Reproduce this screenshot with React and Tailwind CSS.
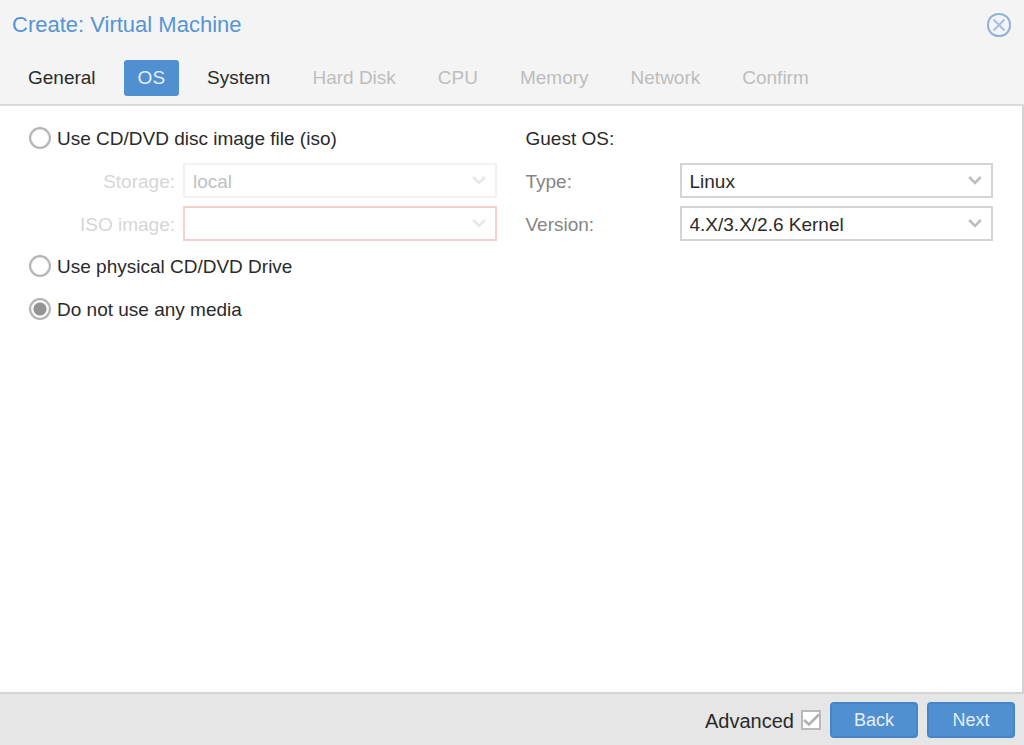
// Create VM wizard, "OS" step: title bar + step tabs, media / guest OS form,
// footer with the Advanced toggle and Back / Next.
import { useState } from 'react'

const steps = [
  ['General', 'done'],
  ['OS', 'active'],
  ['System', 'done'],
  ['Hard Disk', 'locked'],
  ['CPU', 'locked'],
  ['Memory', 'locked'],
  ['Network', 'locked'],
  ['Confirm', 'locked'],
]

const stepStyle = {
  done: 'text-[#2a2a2a]',
  active: 'bg-[#5190d0] text-[#e4eef8]',
  locked: 'text-[#bdbdbd]',
}

function CloseIcon() {
  return (
    <svg viewBox="0 0 24 24" className="size-6" fill="none" aria-hidden>
      <rect x="1" y="1" width="22" height="22" rx="10.5" stroke="#8fb3da" strokeWidth="2" />
      <path d="M6.5 6.5l11 11M17.5 6.5l-11 11" stroke="#a4c1e8" strokeWidth="2" />
    </svg>
  )
}

function Combo({ id, label, options, align = 'left', disabled, invalid }) {
  return (
    <div className="flex h-[35px] items-center">
      <label
        htmlFor={id}
        className={`w-[154px] shrink-0 pt-[2px] pr-2 ${align === 'right' ? 'text-right' : ''} ${disabled ? 'text-[#d6d6d6]' : 'text-[#858585]'}`}
      >
        {label}
      </label>
      <div className="relative h-full min-w-0 flex-1">
        <select
          id={id}
          disabled={disabled}
          className={`h-full w-full appearance-none border-2 bg-white pt-[2px] pr-9 pl-2 opacity-100 outline-none ${invalid ? 'border-[#f3d0cb]' : disabled ? 'border-[#f2f2f2]' : 'border-[#d4d4d4]'} ${disabled ? 'text-[#c0c0c0]' : 'text-[#2a2a2a]'}`}
        >
          {options.map((o) => <option key={o}>{o}</option>)}
        </select>
        <svg
          viewBox="0 0 14 10"
          className={`pointer-events-none absolute top-3 right-[11px] h-[10px] w-[14px] ${disabled ? 'text-[#e8e8e8]' : 'text-[#bebebe]'}`}
          fill="none"
          aria-hidden
        >
          <path d="M1.2 2L7 7.8 12.8 2" stroke="currentColor" strokeWidth="2.6" />
        </svg>
      </div>
    </div>
  )
}

function MediaRadio({ label, value, media, onChange }) {
  return (
    <label className="flex h-9 items-center gap-[6px]">
      <input
        type="radio"
        name="media"
        value={value}
        checked={media === value}
        onChange={() => onChange(value)}
        className="size-[22px] shrink-0 appearance-none rounded-full border-2 border-[#b4b4b4] bg-white shadow-[inset_0_0_2px_#c8c8c8] checked:bg-[radial-gradient(circle,#949494_6px,#fff_7px)]"
      />
      <span className="pt-[2px]">{label}</span>
    </label>
  )
}

export default function App() {
  const [media, setMedia] = useState('none')
  const [advanced, setAdvanced] = useState(true)

  return (
    <div className="flex min-h-screen flex-col bg-white font-['Liberation_Sans',Arial,sans-serif] text-[19px] leading-6 text-[#2a2a2a]">
      <header className="border-b-2 border-[#dadada] bg-[#f4f4f4] pb-2">
        <div className="flex h-[50px] items-center justify-between pr-[13px] pl-3">
          <h1 className="text-[22px] text-[#5594d5]">Create: Virtual Machine</h1>
          <button aria-label="Close"><CloseIcon /></button>
        </div>
        <nav className="mt-[10px] flex gap-[14px] pl-[14px]">
          {steps.map(([name, state]) => (
            <button
              key={name}
              disabled={state === 'locked'}
              className={`h-9 rounded-[3px] px-[14px] whitespace-nowrap ${stepStyle[state]}`}
            >
              {name}
            </button>
          ))}
        </nav>
      </header>

      <main className="grid flex-1 grid-cols-2 content-start gap-[29px] border-r-2 border-[#d2d2d2] px-[29px] pt-[14px]">
        <div className="flex flex-col gap-[7px]">
          <MediaRadio label="Use CD/DVD disc image file (iso)" value="iso" media={media} onChange={setMedia} />
          <div className="flex flex-col gap-2">
            <Combo id="storage" label="Storage:" options={['local']} align="right" disabled={media !== 'iso'} />
            <Combo id="iso" label="ISO image:" options={['']} align="right" disabled={media !== 'iso'} invalid />
          </div>
          <MediaRadio label="Use physical CD/DVD Drive" value="cdrom" media={media} onChange={setMedia} />
          <MediaRadio label="Do not use any media" value="none" media={media} onChange={setMedia} />
        </div>

        <div className="flex flex-col gap-[7px]">
          <h2 className="flex h-9 items-center pt-[2px]">Guest OS:</h2>
          <div className="flex flex-col gap-2">
            <Combo id="ostype" label="Type:" options={['Linux']} />
            <Combo id="osversion" label="Version:" options={['4.X/3.X/2.6 Kernel']} />
          </div>
        </div>
      </main>

      <footer className="flex items-center justify-end gap-[9px] border-t-2 border-[#d2d2d2] bg-[#e6e6e6] px-[9px] pt-2 pb-[7px]">
        <label className="flex items-center gap-[7px]">
          <span className="pt-[2px] text-[20px]">Advanced</span>
          <span className="relative size-5">
            <input
              type="checkbox"
              checked={advanced}
              onChange={(e) => setAdvanced(e.target.checked)}
              className="block size-5 appearance-none border-2 border-[#b9b9b9] bg-white"
            />
            {advanced && (
              <svg viewBox="0 0 20 20" className="pointer-events-none absolute inset-0 size-5" fill="none" aria-hidden>
                <path d="M3 10l5 4.5L18 4.5" stroke="#b0b0b0" strokeWidth="2.6" />
              </svg>
            )}
          </span>
        </label>
        <button className="h-9 w-[88px] rounded-[4px] border-2 border-[#4486cb] bg-[#5190d0] text-[18px] text-[#e4eef8]">Back</button>
        <button className="h-9 w-[88px] rounded-[4px] border-2 border-[#4486cb] bg-[#5190d0] text-[18px] text-[#e4eef8]">Next</button>
      </footer>
    </div>
  )
}
